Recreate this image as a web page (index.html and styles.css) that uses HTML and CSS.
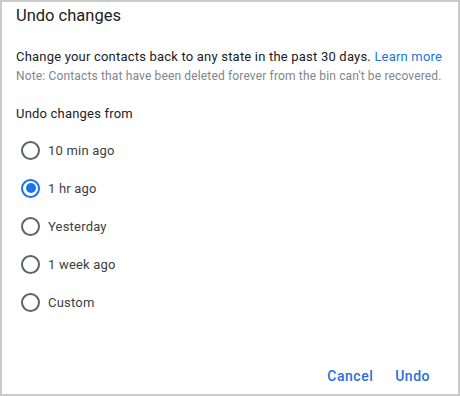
FILE: index.html
```html
<!DOCTYPE html>
<html lang="en">
<head>
    <meta charset="UTF-8">
    <meta name="viewport" content="width=device-width, initial-scale=1.0">
    <title>Undo changes</title>
    <link rel="stylesheet" href="styles.css">
</head>
<body>
    <div class="dialog">
        <h1 class="dialog-title">Undo changes</h1>
        <p class="description">Change your contacts back to any state in the past 30 days. <a href="#" class="link">Learn more</a></p>
        <p class="note">Note: Contacts that have been deleted forever from the bin can't be recovered.</p>

        <div class="group-label">Undo changes from</div>
        <div class="options">
            <label class="option"><span class="radio"></span>10 min ago</label>
            <label class="option"><span class="radio checked"></span>1 hr ago</label>
            <label class="option"><span class="radio"></span>Yesterday</label>
            <label class="option"><span class="radio"></span>1 week ago</label>
            <label class="option"><span class="radio"></span>Custom</label>
        </div>

        <div class="actions">
            <button class="text-btn">Cancel</button>
            <button class="text-btn">Undo</button>
        </div>
    </div>
</body>
</html>
```

FILE: styles.css
```css
body {
    margin: 0;
    padding: 0;
    font-family: Roboto, "Liberation Sans", sans-serif;
    background-color: #fff;
    color: #202124;
}
.dialog {
    box-sizing: border-box;
    width: 460px;
    height: 396px;
    border: 2px solid #cbcbcb;
    padding: 2px 0 0 14px;
    display: flex;
    flex-direction: column;
}
.dialog-title {
    margin: 0;
    font-size: 16.5px;
    font-weight: 400;
    line-height: 24px;
}
.description {
    margin: 19px 0 0 0;
    font-size: 13px;
    line-height: 20px;
    letter-spacing: 0.2px;
}
.link {
    color: #1a73e8;
    text-decoration: none;
}
.note {
    margin: 0;
    font-size: 12px;
    line-height: 18px;
    letter-spacing: 0.15px;
    color: #80868b;
}
.group-label {
    margin-top: 19px;
    font-size: 13px;
    line-height: 20px;
    letter-spacing: 0.2px;
}
.options {
    margin-top: 7px;
    display: flex;
    flex-direction: column;
}
.option {
    display: flex;
    align-items: center;
    height: 38px;
    font-size: 13px;
    letter-spacing: 0.2px;
    color: #3c4043;
}
.radio {
    box-sizing: border-box;
    width: 19px;
    height: 19px;
    margin: 0 8px 0 5px;
    border: 2px solid #5f6368;
    border-radius: 50%;
    display: flex;
    align-items: center;
    justify-content: center;
}
.radio.checked {
    border-color: #1a73e8;
}
.radio.checked::after {
    content: "";
    width: 10px;
    height: 10px;
    border-radius: 50%;
    background-color: #1a73e8;
}
.actions {
    margin-top: auto;
    display: flex;
    justify-content: flex-end;
    gap: 6px;
    padding: 0 20px 0 0;
}
.text-btn {
    font-family: Roboto, "Liberation Sans", sans-serif;
    font-size: 14px;
    font-weight: 500;
    letter-spacing: 0.5px;
    color: #2a6fdb;
    background: none;
    border: none;
    padding: 8px 8px;
    line-height: 20px;
    cursor: pointer;
}
```
